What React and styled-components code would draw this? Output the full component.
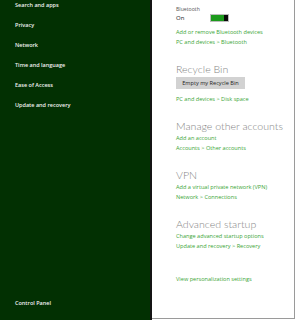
import React from "react";
import styled, { createGlobalStyle } from "styled-components";

const Global = createGlobalStyle`
  html, body { margin: 0; padding: 0; background: #ffffff; }
  body { font-family: "Open Sans", "Noto Sans", sans-serif; }
`;

const Screen = styled.div`
  display: flex;
  width: 297px;
  height: 320px;
  overflow: hidden;
  background: #ffffff;
`;

const Sidebar = styled.nav`
  width: 150px;
  flex: none;
  background: #023002;
  display: flex;
  flex-direction: column;
  padding: 0 0 2px 15px;
  box-sizing: border-box;
  height: 320px;
`;

const NavItem = styled.div`
  color: #f2f2f2;
  font-size: 5.5px;
  font-weight: 600;
  line-height: 10px;
  margin-bottom: 10px;
  margin-top: ${(p) => (p.$bottom ? "auto" : "0")};
  white-space: nowrap;
`;

const Divider = styled.div`
  width: 2px;
  flex: none;
  background: #141414;
`;

const Pane = styled.main`
  flex: none;
  width: 143px;
  height: 319px;
  box-sizing: border-box;
  border-right: 1px solid #9a9a9a;
  border-bottom: 1px solid #9a9a9a;
  padding: 5px 0 0 24px;
  display: flex;
  flex-direction: column;
  align-items: flex-start;
`;

const Caption = styled.div`
  color: #555;
  font-size: 5.2px;
  line-height: 8px;
`;

const ToggleRow = styled.div`
  display: flex;
  align-items: center;
  height: 8px;
  margin-top: 1px;
`;

const ToggleLabel = styled.span`
  width: 34px;
  color: #222;
  font-size: 6px;
  line-height: 8px;
`;

const Toggle = styled.div`
  width: 19px;
  height: 8px;
  box-sizing: border-box;
  border: 1px solid #bcbcbc;
  display: flex;
`;

const ToggleFill = styled.div`
  flex: 1;
  background: #1c9a1c;
`;

const ToggleThumb = styled.div`
  width: 4px;
  background: #0a0a0a;
`;

const Link = styled.a`
  display: block;
  color: #3aa536;
  font-size: 5.6px;
  line-height: 10px;
  white-space: nowrap;
  text-decoration: none;
  margin-top: ${(p) => p.$gap || 0}px;
`;

const Heading = styled.h2`
  margin: ${(p) => p.$gap || 0}px 0 0 0;
  font-family: "Lato", "Open Sans", sans-serif;
  font-size: 10.6px;
  font-weight: 300;
  color: #858585;
  line-height: 14px;
  white-space: nowrap;
`;

const Button = styled.button`
  margin-top: 1px;
  width: 69px;
  height: 12px;
  padding: 0;
  border: none;
  background: #d2d2d2;
  color: #222;
  font-family: inherit;
  font-size: 5.6px;
  line-height: 12px;
`;

export default function App() {
  const nav = [
    "Search and apps",
    "Privacy",
    "Network",
    "Time and language",
    "Ease of Access",
    "Update and recovery",
  ];
  return (
    <>
      <Global />
      <Screen>
        <Sidebar>
          {nav.map((n) => (
            <NavItem key={n}>{n}</NavItem>
          ))}
          <NavItem $bottom>Control Panel</NavItem>
        </Sidebar>
        <Divider />
        <Pane>
          <Caption>Bluetooth</Caption>
          <ToggleRow>
            <ToggleLabel>On</ToggleLabel>
            <Toggle>
              <ToggleFill />
              <ToggleThumb />
            </Toggle>
          </ToggleRow>
          <Link $gap={5}>Add or remove Bluetooth devices</Link>
          <Link>PC and devices &gt; Bluetooth</Link>

          <Heading $gap={15}>Recycle Bin</Heading>
          <Button>Empty my Recycle Bin</Button>
          <Link $gap={5}>PC and devices &gt; Disk space</Link>

          <Heading $gap={15}>Manage other accounts</Heading>
          <Link>Add an account</Link>
          <Link>Accounts &gt; Other accounts</Link>

          <Heading $gap={15}>VPN</Heading>
          <Link>Add a virtual private network (VPN)</Link>
          <Link>Network &gt; Connections</Link>

          <Heading $gap={15}>Advanced startup</Heading>
          <Link>Change advanced startup options</Link>
          <Link>Update and recovery &gt; Recovery</Link>

          <Link $gap={23}>View personalization settings</Link>
        </Pane>
      </Screen>
    </>
  );
}
